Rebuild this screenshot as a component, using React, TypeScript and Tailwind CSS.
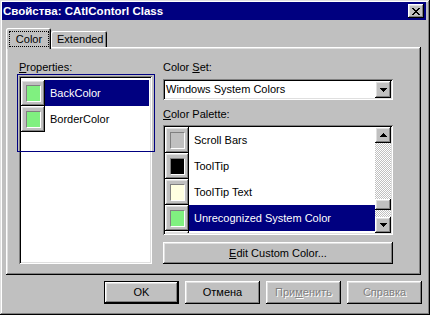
const raised =
  "shadow-[inset_-1px_-1px_#000,inset_1px_1px_#fff,inset_-2px_-2px_#808080,inset_2px_2px_#dfdfdf]";
const sunken =
  "shadow-[inset_1px_1px_#808080,inset_-1px_-1px_#fff,inset_2px_2px_#000,inset_-2px_-2px_#dfdfdf]";

function Arrow({ up }: { up?: boolean }) {
  return (
    <svg width="7" height="4" viewBox="0 0 7 4" shapeRendering="crispEdges">
      {up ? (
        <path d="M3 0h1v1h1v1h1v1h1v1H0V3h1V2h1V1h1z" fill="#000" />
      ) : (
        <path d="M0 0h7v1H6v1H5v1H4v1H3V3H2V2H1V1H0z" fill="#000" />
      )}
    </svg>
  );
}

function CloseGlyph() {
  return (
    <svg width="8" height="7" viewBox="0 0 8 7" shapeRendering="crispEdges">
      <path
        d="M0 0h2v1H0zM6 0h2v1H6zM1 1h2v1H1zM5 1h2v1H5zM2 2h4v1H2zM3 3h2v1H3zM2 4h4v1H2zM1 5h2v1H1zM5 5h2v1H5zM0 6h2v1H0zM6 6h2v1H6z"
        fill="#000"
      />
    </svg>
  );
}

function Swatch({ color }: { color: string }) {
  return (
    <div
      className={`flex h-[26px] w-[24px] shrink-0 items-center justify-center bg-[#c0c0c0] ${raised}`}
    >
      <div className="h-[17px] w-[15px] border border-t-[#808080] border-l-[#808080] border-b-white border-r-white p-0">
        <div className="h-full w-full" style={{ background: color }} />
      </div>
    </div>
  );
}

function Row({
  color,
  label,
  selected,
}: {
  color: string;
  label: string;
  selected?: boolean;
}) {
  return (
    <div className="flex h-[26px] shrink-0 items-center">
      <Swatch color={color} />
      <div
        className={`flex h-full flex-1 items-center pl-[5px] ${
          selected ? "bg-[#000080] text-white" : "text-black"
        }`}
      >
        {label}
      </div>
    </div>
  );
}

const palette = [
  { color: "#c0c0c0", label: "Scroll Bars" },
  { color: "#000000", label: "ToolTip" },
  { color: "#ffffe1", label: "ToolTip Text" },
  { color: "#80f080", label: "Unrecognized System Color", selected: true },
  { color: "#c0c0c0", label: "" },
];

export default function App() {
  return (
    <div
      className={`flex h-[315px] w-[430px] flex-col bg-[#c0c0c0] pt-[2px] pl-[2px] pr-[4px] font-['Liberation_Sans',Arial,sans-serif] text-[11px] leading-[13px] text-black shadow-[inset_-1px_-1px_#000,inset_1px_1px_#dfdfdf,inset_-2px_-2px_#808080,inset_2px_2px_#fff]`}
    >
      {/* title bar */}
      <div className="flex h-[18px] items-center justify-between bg-[#000080] pl-[1px] pr-[2px]">
        <span className="text-[11.5px] font-bold text-white">
          Свойства: CAtlContorl Class
        </span>
        <div
          className={`flex h-[14px] w-[16px] items-center justify-center bg-[#c0c0c0] ${raised}`}
        >
          <CloseGlyph />
        </div>
      </div>

      {/* tabs */}
      <div className="mt-[8px] ml-[4px] flex items-end">
        <div className="relative z-10 -mb-[2px] h-[21px] w-[45px] rounded-t-[2px] bg-[#c0c0c0] pt-[3px] pl-[3px] pr-[2px] shadow-[inset_1px_1px_#fff,inset_-1px_0_#000,inset_-2px_0_#808080]">
          <div className="flex h-[16px] items-center justify-center border border-dotted border-black">
            Color
          </div>
        </div>
        <div className="flex h-[16px] w-[56px] items-center rounded-t-[2px] pl-[6px] shadow-[inset_1px_1px_#fff,inset_-1px_0_#000,inset_-2px_0_#808080]">
          Extended
        </div>
      </div>

      {/* tab page */}
      <div
        className={`ml-[4px] flex h-[228px] w-[415px] gap-[11px] pt-[14px] pl-[13px] ${raised}`}
      >
        <div className="relative flex w-[133px] flex-col">
          <div>
            <span className="underline">P</span>roperties:
          </div>
          <div className={`mt-[2px] h-[188px] bg-white p-[2px] pt-[4px] ${sunken}`}>
            <div className="flex flex-col pr-[1px]">
              <Row color="#80f080" label="BackColor" selected />
              <Row color="#80f080" label="BorderColor" />
            </div>
          </div>
          <div className="absolute top-[13px] -left-[2px] h-[78px] w-[138px] border border-[#000080]" />
        </div>

        <div className="flex w-[230px] flex-col">
          <div>
            Color <span className="underline">S</span>et:
          </div>
          <div
            className={`mt-[5px] flex h-[21px] items-center bg-white p-[2px] ${sunken}`}
          >
            <div className="flex-1 pl-[1px]">Windows System Colors</div>
            <div
              className={`flex h-[17px] w-[16px] items-center justify-center bg-[#c0c0c0] ${raised}`}
            >
              <Arrow />
            </div>
          </div>
          <div className="mt-[8px]">
            <span className="underline">C</span>olor Palette:
          </div>
          <div className={`mt-[4px] flex h-[110px] bg-white p-[2px] ${sunken}`}>
            <div className="flex flex-1 flex-col overflow-hidden">
              {palette.map((p, i) => (
                <Row key={i} color={p.color} label={p.label} selected={p.selected} />
              ))}
            </div>
            <div className="flex w-[16px] flex-col">
              <div
                className={`flex h-[16px] items-center justify-center bg-[#c0c0c0] ${raised}`}
              >
                <Arrow up />
              </div>
              <div className="flex-1 bg-[repeating-conic-gradient(#c0c0c0_0_25%,#fff_0_50%)] bg-[length:2px_2px]" />
              <div className={`h-[11px] bg-[#c0c0c0] ${raised}`} />
              <div className="h-[7px] bg-[repeating-conic-gradient(#c0c0c0_0_25%,#fff_0_50%)] bg-[length:2px_2px]" />
              <div
                className={`flex h-[16px] items-center justify-center bg-[#c0c0c0] ${raised}`}
              >
                <Arrow />
              </div>
            </div>
          </div>
          <div
            className={`mt-[7px] flex h-[22px] items-center justify-center bg-[#c0c0c0] ${raised}`}
          >
            <span>
              <span className="underline">E</span>dit Custom Color...
            </span>
          </div>
        </div>
      </div>

      {/* buttons */}
      <div className="mt-[6px] mr-[4px] flex justify-end gap-[6px]">
        <div className="h-[23px] w-[75px] border border-black">
          <div
            className={`flex h-full w-full items-center justify-center bg-[#c0c0c0] ${raised}`}
          >
            OK
          </div>
        </div>
        <div
          className={`flex h-[23px] w-[75px] items-center justify-center bg-[#c0c0c0] ${raised}`}
        >
          Отмена
        </div>
        <div
          className={`flex h-[23px] w-[75px] items-center justify-center bg-[#c0c0c0] text-[#808080] [text-shadow:1px_1px_0_#fff] ${raised}`}
        >
          <span>
            При<span className="underline">м</span>енить
          </span>
        </div>
        <div
          className={`flex h-[23px] w-[75px] items-center justify-center bg-[#c0c0c0] text-[#808080] [text-shadow:1px_1px_0_#fff] ${raised}`}
        >
          Справка
        </div>
      </div>
    </div>
  );
}
